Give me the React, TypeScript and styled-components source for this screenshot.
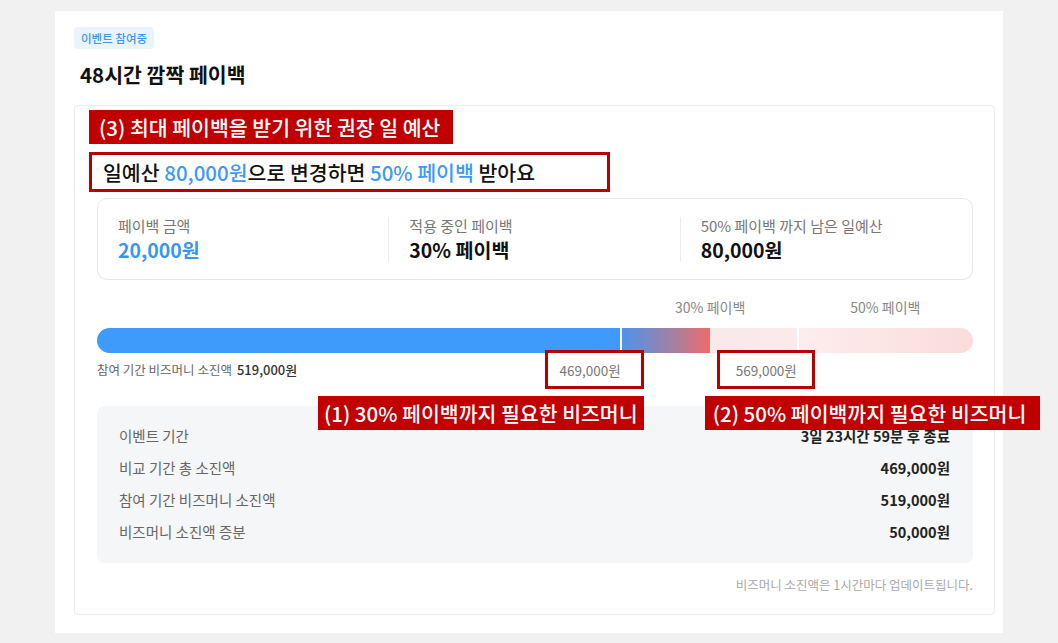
import React from "react";
import styled, { createGlobalStyle } from "styled-components";

const Global = createGlobalStyle`
  html, body { margin: 0; padding: 0; background: #f1f1f1; }
  body { font-family: "Noto Sans CJK KR", "Noto Sans", sans-serif; color: #111; }
  * { box-sizing: border-box; }
`;

const Page = styled.div`
  width: 1058px;
  height: 643px;
  padding: 11px 0 0 55px;
  overflow: hidden;
`;

const Card = styled.section`
  width: 948px;
  background: #fff;
  padding: 16px 8px 18px 19px;
  display: flex;
  flex-direction: column;
  align-items: stretch;
`;

const Badge = styled.span`
  align-self: flex-start;
  display: block;
  height: 22px;
  line-height: 22px;
  padding: 0 7px;
  border-radius: 4px;
  background: #e9f4ff;
  color: #3d97f2;
  font-size: 11.5px;
  font-weight: 500;
`;

const Title = styled.h1`
  margin: 12px 0 0 6px;
  font-size: 20.5px;
  line-height: 26px;
  font-weight: 600;
  color: #111;
`;

const Panel = styled.div`
  margin-top: 18px;
  border: 1px solid #ececec;
  border-radius: 4px;
  padding: 4px 21px 20px 22px;
`;

const RedLabel = styled.div`
  display: inline-block;
  background: #c00000;
  color: #fff;
  font-size: 20.5px;
  line-height: 34px;
  font-weight: 500;
  padding: 0 13px 0 10px;
  white-space: nowrap;
`;

const TopLabel = styled(RedLabel)`
  margin-left: -8px;
`;

const RecommendBox = styled.div`
  width: 521px;
  margin: 8px 0 0 -8px;
  border: 3px solid #b80000;
  padding: 0 11px;
  font-size: 20.5px;
  line-height: 34px;
  font-weight: 500;
  color: #111;
  white-space: nowrap;
`;

const Blue = styled.span`
  color: #3d9af5;
`;

const StatsCard = styled.div`
  margin-top: 6px;
  height: 82px;
  border: 1px solid #e6e6e6;
  border-radius: 10px;
  display: grid;
  grid-template-columns: 1fr 1fr 1fr;
  align-items: center;
`;

const StatCol = styled.div<{ $divider?: boolean }>`
  padding-left: 20px;
  border-left: ${(p) => (p.$divider ? "1px solid #ececec" : "none")};
  margin-left: ${(p) => (p.$divider ? "-1px" : "0")};
  display: flex;
  flex-direction: column;
  gap: 3px;
`;

const StatLabel = styled.div`
  font-size: 15px;
  line-height: 18px;
  color: #777;
`;

const StatValue = styled.div<{ $blue?: boolean }>`
  font-size: 19.5px;
  line-height: 24px;
  font-weight: 600;
  color: ${(p) => (p.$blue ? "#3a97f0" : "#111")};
`;

const SegGrid = styled.div`
  display: grid;
  grid-template-columns: 3fr 1fr 1fr;
`;

const StepRow = styled(SegGrid)`
  margin-top: 17px;
  font-size: 14px;
  line-height: 20px;
  color: #888;
  text-align: center;
`;

const Bar = styled(SegGrid)`
  margin-top: 11px;
  height: 25px;
  border-radius: 13px;
  overflow: hidden;
  column-gap: 2px;
  background: #fff;
`;

const BarFill = styled.div<{ $bg: string }>`
  background: ${(p) => p.$bg};
`;

const TickRow = styled(SegGrid)`
  margin-top: 7px;
  font-size: 13.5px;
  line-height: 20px;
  color: #777;
`;

const TickCell = styled.div<{ $pr: number }>`
  display: flex;
  justify-content: space-between;
  align-items: center;
  padding-right: ${(p) => p.$pr}px;
`;

const Spent = styled.span`
  color: #666;
  font-size: 12.5px;
  strong {
    margin-left: 5px;
    color: #333;
    font-weight: 500;
    font-size: 13px;
  }
`;

const Tick = styled.span`
  position: relative;
  margin-left: auto;
`;

const TickBox = styled.span<{ $l: number; $r: number }>`
  position: absolute;
  left: ${(p) => p.$l}px;
  right: ${(p) => p.$r}px;
  top: -10px;
  bottom: -9px;
  border: 3px solid #b80000;
`;

const TickNote = styled(RedLabel)<{ $l?: number; $r?: number; $pad: string }>`
  position: absolute;
  top: 36px;
  z-index: 2;
  ${(p) => (p.$l !== undefined ? `left: ${p.$l}px;` : "")}
  ${(p) => (p.$r !== undefined ? `right: ${p.$r}px;` : "")}
  padding: ${(p) => p.$pad};
`;

const InfoBox = styled.div`
  margin-top: 26px;
  background: #f5f6f8;
  border-radius: 8px;
  padding: 20px 23px 21px 22px;
  display: flex;
  flex-direction: column;
  gap: 12px;
`;

const InfoRow = styled.div`
  display: flex;
  justify-content: space-between;
  font-size: 14.5px;
  line-height: 20px;
`;

const InfoLabel = styled.span`
  color: #666;
`;

const InfoValue = styled.span`
  color: #222;
  font-weight: 600;
`;

const Footnote = styled.div`
  margin-top: 13px;
  text-align: right;
  font-size: 12.5px;
  line-height: 18px;
  color: #aaa;
`;

const infoRows: [string, string][] = [
  ["이벤트 기간", "3일 23시간 59분 후 종료"],
  ["비교 기간 총 소진액", "469,000원"],
  ["참여 기간 비즈머니 소진액", "519,000원"],
  ["비즈머니 소진액 증분", "50,000원"],
];

export default function App() {
  return (
    <Page>
      <Global />
      <Card>
        <Badge>이벤트 참여중</Badge>
        <Title>48시간 깜짝 페이백</Title>
        <Panel>
          <TopLabel>(3) 최대 페이백을 받기 위한 권장 일 예산</TopLabel>
          <RecommendBox>
            일예산 <Blue>80,000원</Blue>으로 변경하면 <Blue>50% 페이백</Blue> 받아요
          </RecommendBox>
          <StatsCard>
            <StatCol>
              <StatLabel>페이백 금액</StatLabel>
              <StatValue $blue>20,000원</StatValue>
            </StatCol>
            <StatCol $divider>
              <StatLabel>적용 중인 페이백</StatLabel>
              <StatValue>30% 페이백</StatValue>
            </StatCol>
            <StatCol $divider>
              <StatLabel>50% 페이백 까지 남은 일예산</StatLabel>
              <StatValue>80,000원</StatValue>
            </StatCol>
          </StatsCard>
          <StepRow>
            <span />
            <span>30% 페이백</span>
            <span>50% 페이백</span>
          </StepRow>
          <Bar>
            <BarFill $bg="#3e9bfb" />
            <BarFill $bg="linear-gradient(90deg, #4e93ea 0%, #a77f9f 30%, #f06a6a 50%, #f8eaea 50%, #fbeaea 100%)" />
            <BarFill $bg="linear-gradient(90deg, #fdeded 0%, #fbdcdc 100%)" />
          </Bar>
          <TickRow>
            <TickCell $pr={2}>
              <Spent>
                참여 기간 비즈머니 소진액<strong>519,000원</strong>
              </Spent>
              <Tick>
                469,000원
                <TickBox $l={-14} $r={-23} />
                <TickNote $r={-23} $pad="0 6px">
                  (1) 30% 페이백까지 필요한 비즈머니
                </TickNote>
              </Tick>
            </TickCell>
            <TickCell $pr={1}>
              <Tick>
                569,000원
                <TickBox $l={-19} $r={-18} />
                <TickNote $l={-31} $pad="0 14px 0 8px">
                  (2) 50% 페이백까지 필요한 비즈머니
                </TickNote>
              </Tick>
            </TickCell>
          </TickRow>
          <InfoBox>
            {infoRows.map(([l, v]) => (
              <InfoRow key={l}>
                <InfoLabel>{l}</InfoLabel>
                <InfoValue>{v}</InfoValue>
              </InfoRow>
            ))}
          </InfoBox>
          <Footnote>비즈머니 소진액은 1시간마다 업데이트됩니다.</Footnote>
        </Panel>
      </Card>
    </Page>
  );
}
